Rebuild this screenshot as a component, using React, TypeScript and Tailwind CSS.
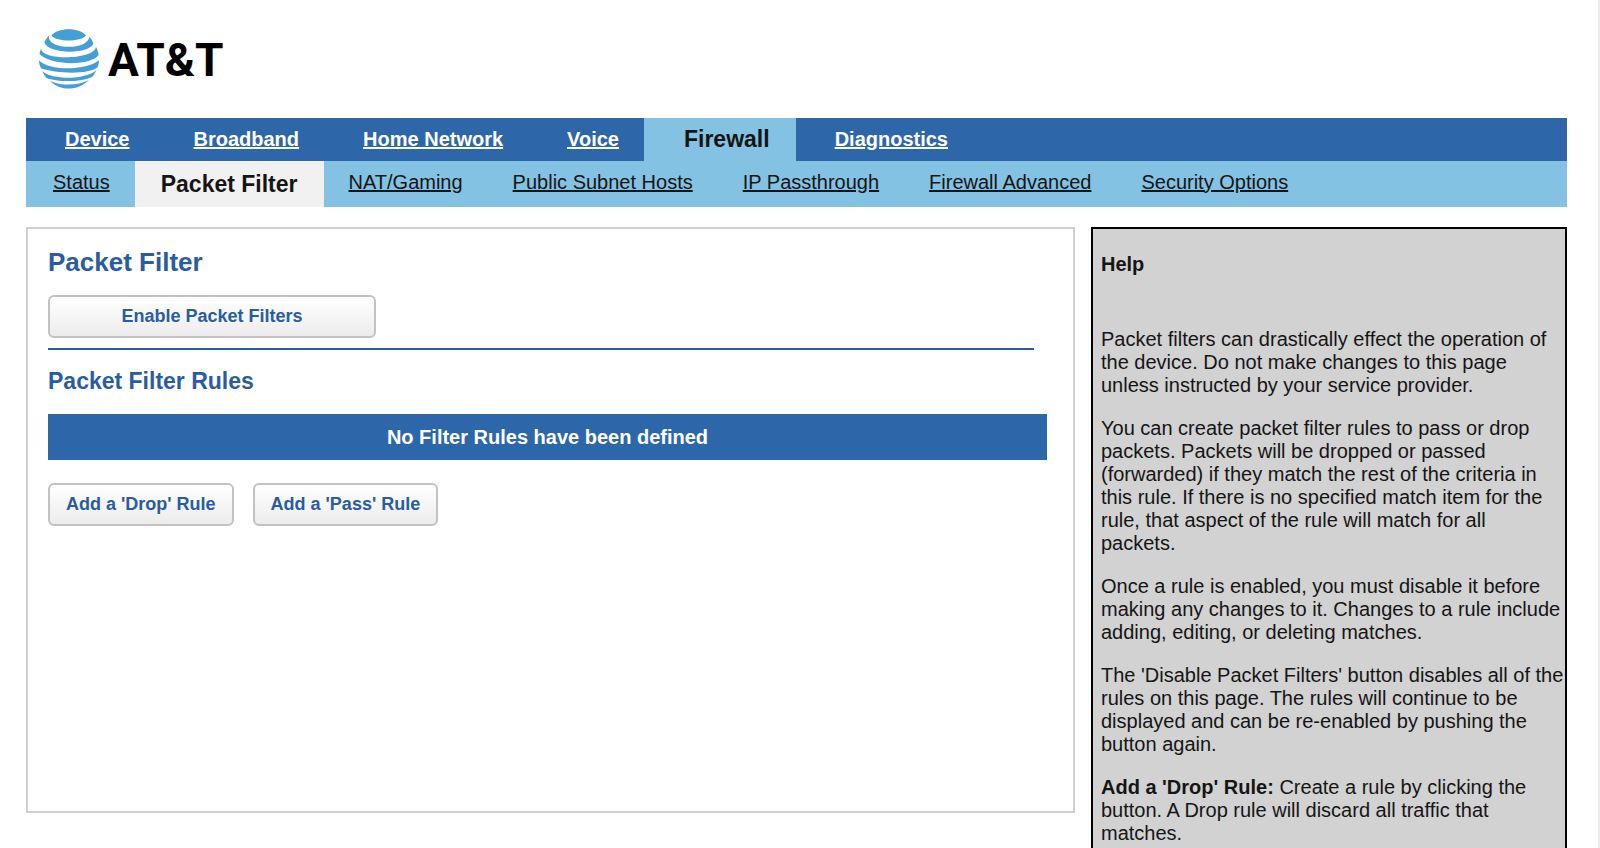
import React from 'react';

const mainTabs = ['Device', 'Broadband', 'Home Network', 'Voice', 'Firewall', 'Diagnostics'];

const subTabs = [
  'Status',
  'Packet Filter',
  'NAT/Gaming',
  'Public Subnet Hosts',
  'IP Passthrough',
  'Firewall Advanced',
  'Security Options',
];

const buttonStyle =
  'h-[43px] rounded-md border-2 border-[#c2c2c2] bg-gradient-to-b from-white to-[#ececec] pb-0.5 text-lg leading-5 font-bold text-[#2a5d9f]';

function Globe() {
  return (
    <svg viewBox="0 0 180 180" className="h-[60px] w-[60px]" fill="#459fd6" aria-hidden="true">
      <path d="M37 20 C54 -6 124 -6 141 20 C124 39 54 39 37 20Z" />
      <path d="M30 20 C22 62 145 66 151 24 C157 30 161 36 163 43 C158 75 28 79 16 40 C20 31 25 24 30 20Z" />
      <path d="M6 60 C12 96 165 92 171 54 C175 62 178 70 179 78 C160 108 45 114 2 76 C2 70 4 64 6 60Z" />
      <path d="M0 94 C30 128 145 124 180 94 C180 101 178 109 176 115 C150 138 50 134 6 118 C2 110 0 102 0 94Z" />
      <path d="M10 127 C45 155 140 152 172 124 C169 131 165 138 160 143 C130 160 55 160 22 147 C17 141 13 134 10 127Z" />
      <path d="M32 155 C65 171 115 171 150 153 C115 187 65 187 32 155Z" />
    </svg>
  );
}

function App() {
  return (
    <div className="flex h-screen flex-col overflow-hidden border-r-2 border-[#ececec] bg-white pr-[31px] pl-[26px] font-['Liberation_Sans',Arial,sans-serif] text-xl leading-[23px] text-[#151515]">
      <header className="flex h-[118px] shrink-0 items-center gap-[9px] pl-[13px]">
        <Globe />
        <span className="pt-0.5 font-['Roboto',sans-serif] text-[46px] leading-[54px] font-bold text-black">
          AT&amp;T
        </span>
      </header>

      <nav className="flex h-[43px] shrink-0 bg-[#2d66a9] font-bold">
        {mainTabs.map((tab) =>
          tab === 'Firewall' ? (
            <a
              key={tab}
              href="#"
              className="flex items-center bg-[#84c2e3] pr-[26px] pl-10 text-[23px]"
            >
              {tab}
            </a>
          ) : (
            <a
              key={tab}
              href="#"
              className="flex items-center pr-[25px] pl-[39px] text-white underline"
            >
              {tab}
            </a>
          )
        )}
      </nav>

      <nav className="flex h-[46px] shrink-0 bg-[#84c2e3] pl-0.5">
        {subTabs.map((tab) =>
          tab === 'Packet Filter' ? (
            <a
              key={tab}
              href="#"
              className="flex items-center bg-[#f1f1f1] px-[26px] text-[23px] font-bold"
            >
              {tab}
            </a>
          ) : (
            <a key={tab} href="#" className="flex items-center px-[25px] pb-1 underline">
              {tab}
            </a>
          )
        )}
      </nav>

      <div className="mt-5 grid min-h-0 flex-1 grid-cols-[minmax(0,1049fr)_minmax(0,476fr)] gap-4">
        <main className="mb-[35px] border-2 border-[#d0d0d0] pt-[18px] pr-[26px] pl-5 text-[#2a5d9f]">
          <h1 className="text-[26px] leading-[30px] font-bold">Packet Filter</h1>
          <button type="button" className={`${buttonStyle} mt-[18px] block w-[328px]`}>
            Enable Packet Filters
          </button>
          <hr className="mt-[10px] mr-[13px] border-t-2 border-[#2a5d9f]" />
          <h2 className="mt-[18px] text-[23px] leading-[26px] font-bold">Packet Filter Rules</h2>
          <table className="mt-5 w-full bg-[#2d66a9] text-white">
            <thead>
              <tr className="h-[46px]">
                <th className="font-bold">No Filter Rules have been defined</th>
              </tr>
            </thead>
          </table>
          <div className="mt-[23px] flex gap-[19px]">
            <button type="button" className={`${buttonStyle} px-4`}>
              Add a 'Drop' Rule
            </button>
            <button type="button" className={`${buttonStyle} px-4`}>
              Add a 'Pass' Rule
            </button>
          </div>
        </main>

        <aside className="space-y-5 overflow-hidden border-2 border-b-0 border-black bg-[#d2d2d2] pt-6 pl-2">
          <h3 className="mb-[52px] font-bold">Help</h3>
          <p>
            Packet filters can drastically effect the operation of the device. Do not make changes
            to this page unless instructed by your service provider.
          </p>
          <p>
            You can create packet filter rules to pass or drop packets. Packets will be dropped or
            passed (forwarded) if they match the rest of the criteria in this rule. If there is no
            specified match item for the rule, that aspect of the rule will match for all packets.
          </p>
          <p>
            Once a rule is enabled, you must disable it before making any changes to it. Changes to
            a rule include adding, editing, or deleting matches.
          </p>
          <p>
            The 'Disable Packet Filters' button disables all of the rules on this page. The rules
            will continue to be displayed and can be re-enabled by pushing the button again.
          </p>
          <p>
            <b>Add a 'Drop' Rule:</b> Create a rule by clicking the button. A Drop rule will discard
            all traffic that matches.
          </p>
        </aside>
      </div>
    </div>
  );
}

export default App;
